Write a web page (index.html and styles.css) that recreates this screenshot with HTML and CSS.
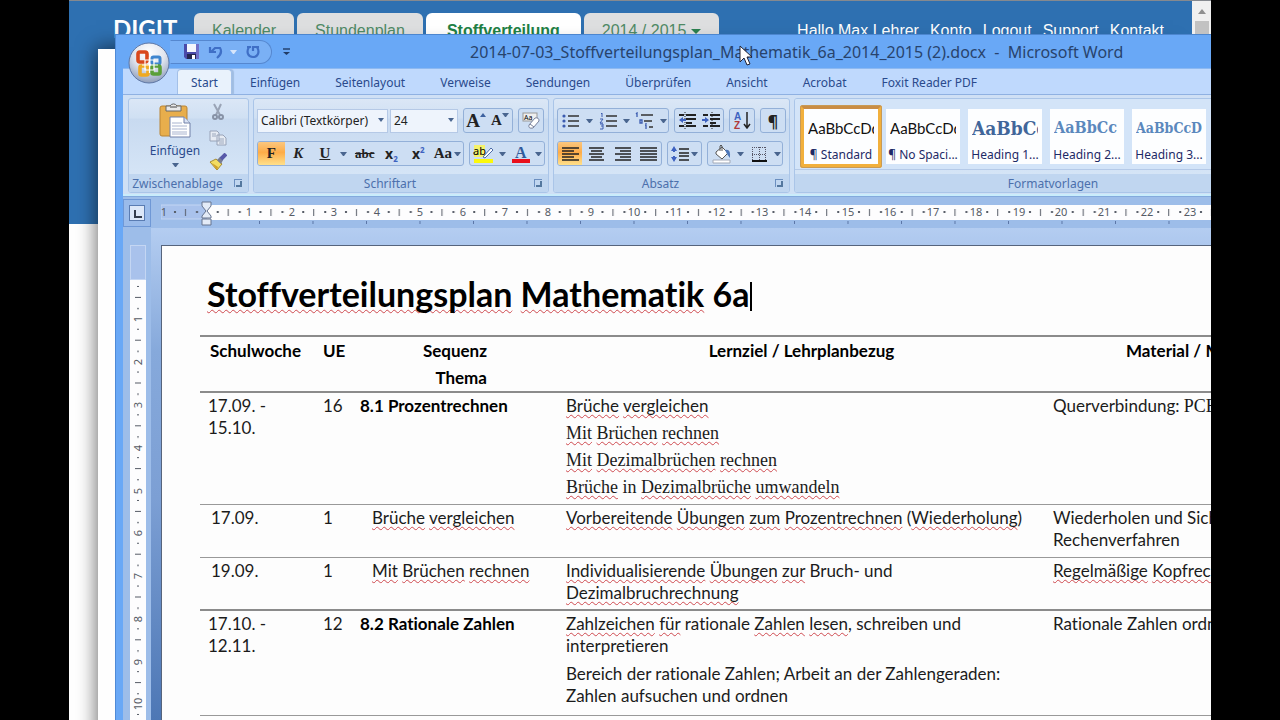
FILE: index.html
```html
<!DOCTYPE html>
<html lang="de">
<head>
<meta charset="utf-8">
<title>Stoffverteilungsplan Mathematik 6a</title>
<link rel="stylesheet" href="styles.css">
</head>
<body>
<div class="stage">
  <div class="site">
    <header class="site-header">
      <span class="brand">DIGIT</span>
      <nav class="site-tabs">
        <a href="#">Kalender</a>
        <a href="#">Stundenplan</a>
        <a href="#" class="current">Stoffverteilung</a>
        <a href="#">2014 / 2015 <i class="caret"></i></a>
      </nav>
      <nav class="site-links">
        <span>Hallo Max Lehrer</span>
        <a href="#">Konto</a>
        <a href="#">Logout</a>
        <a href="#">Support</a>
        <a href="#">Kontakt</a>
      </nav>
    </header>
    <div class="scrollbar"><i class="scroll-up"></i><i class="scroll-thumb"></i></div>
  </div>
  <div class="panel"></div>

  <main class="word">
    <header class="titlebar">
      <div class="quick">
        <button aria-label="Speichern"><svg width="17" height="17" viewBox="0 0 17 17"><path d="M1 1h15v15H3l-2-2z" fill="#4a4aa8"/><path d="M4 1h9v8H4z" fill="#f4f6fc"/><path d="M4 11h9v5H4z" fill="#26264e"/><path d="M9 12h3v4H9z" fill="#fff"/><path d="M13 1h3v15h-3z" fill="#6f6fc8"/></svg></button>
        <button aria-label="Rückgängig"><svg width="16" height="16" viewBox="0 0 16 16"><path d="M2 3v5h6M3 8l4-4h5q3 5-3 10" fill="none" stroke="#3f6fc6" stroke-width="2.2"/></svg></button>
        <i class="caret pale"></i>
        <button aria-label="Wiederholen" class="redo"><svg width="16" height="16" viewBox="0 0 16 16"><path d="M2 3h4M4 3c-3 5-1 10 4 10s7-5 4-10M8 7V3h6" fill="none" stroke="#3f6fc6" stroke-width="2.2"/></svg></button>
      </div>
      <button aria-label="Symbolleiste anpassen" class="customize"><svg width="9" height="8" viewBox="0 0 9 8"><path d="M1 1h7" stroke="#223c66" stroke-width="1.4"/><path d="M1 4h7L4.500 7z" fill="#223c66"/></svg></button>
      <h1>2014-07-03_Stoffverteilungsplan_Mathematik_6a_2014_2015 (2).docx&nbsp; - &nbsp;Microsoft Word</h1>
    </header>
    <button class="office" aria-label="Office"><svg width="42" height="42" viewBox="0 0 42 42">
      <defs><radialGradient id="orb" cx=".5" cy=".25" r=".8"><stop offset="0" stop-color="#fff"/><stop offset=".5" stop-color="#dfe4ee"/><stop offset="1" stop-color="#8595b4"/></radialGradient></defs>
      <circle cx="21" cy="21" r="20" fill="url(#orb)" stroke="#5f78a6"/>
      <g fill="none" stroke-width="3.600"><rect x="10" y="10" width="9" height="10" rx="2" stroke="#d9481c"/><rect x="24" y="15" width="8" height="7" rx="1.500" stroke="#3f86cf" stroke-width="3"/><rect x="12" y="24" width="8" height="9" rx="1.500" stroke="#f0a920"/><rect x="24" y="24" width="8" height="8" rx="1.500" stroke="#5a9f38"/></g>
      <path d="M17 18h9v10h-9zM21.500 15v16M14 23h16" fill="none" stroke="#fff" stroke-width="1.200"/></svg></button>

    <nav class="tabs">
      <button class="active">Start</button>
      <button>Einfügen</button>
      <button>Seitenlayout</button>
      <button>Verweise</button>
      <button>Sendungen</button>
      <button>Überprüfen</button>
      <button>Ansicht</button>
      <button>Acrobat</button>
      <button>Foxit Reader PDF</button>
    </nav>

    <div class="ribbon">
      <section class="group clipboard">
        <div class="tools clip-tools">
          <button class="paste"><svg width="32" height="35" viewBox="0 0 32 35"><rect x="1" y="3" width="27" height="30" rx="2" fill="#e8ae4c" stroke="#b98434"/><path d="M7 3h4a4 4 0 0 1 7 0h4v5H7z" fill="#e9e9e9" stroke="#666"/><path d="M11 4h7" stroke="#444"/><path d="M11 14h14l6 6v14H11z" fill="#fff" stroke="#7080a8"/><path d="M25 14v6h6" fill="#dbe3f4" stroke="#7080a8"/><path d="M13 20h10M13 23h15M13 26h15M13 29h15M13 31h15" stroke="#a9b4cf"/></svg>
            <span>Einfügen</span><i class="caret"></i></button>
          <div class="clip-side">
            <button aria-label="Ausschneiden"><svg width="18" height="18" viewBox="0 0 18 18"><path d="M5 1l6 11M12 1L7 12" stroke="#9aa4b6" stroke-width="2"/><circle cx="6" cy="14" r="2" fill="none" stroke="#8792a6" stroke-width="2"/><circle cx="12" cy="14" r="2" fill="none" stroke="#8792a6" stroke-width="2"/></svg></button>
            <button aria-label="Kopieren"><svg width="18" height="18" viewBox="0 0 18 18"><path d="M1 3h7l2 2v8H1zM8 7h6l3 3v7H8z" fill="#e6ebf3" stroke="#98a3b8"/><path d="M3 6h4M3 8h4M10 11h5M10 13h5M10 15h5" stroke="#9ca8bd"/></svg></button>
            <button aria-label="Format übertragen"><svg width="18" height="18" viewBox="0 0 18 18"><path d="M1 9l6-3 6 5-5 6z" fill="#f2dc62" stroke="#a68b33"/><path d="M3 10l6 4-1 3z" fill="#d0a028"/><path d="M8 7l3-3 3 3-2 4z" fill="#777c92"/><path d="M12 6l5-5" stroke="#5759a9" stroke-width="4"/></svg></button>
          </div>
        </div>
        <footer>Zwischenablage<button class="launcher" aria-label="Zwischenablage öffnen"></button></footer>
      </section>

      <section class="group font">
        <div class="tools">
          <div class="row">
            <div class="combos"><label class="combo face"><select aria-label="Schriftart"><option>Calibri (Textkörper)</option></select></label><label class="combo size"><select aria-label="Schriftgrad"><option>24</option></select></label></div>
            <div class="set"><button class="serif big" aria-label="Schrift vergrößern">A<i class="up"></i></button><button class="serif" aria-label="Schrift verkleinern">A<i class="caret raised"></i></button></div>
            <div class="set"><button aria-label="Formatierung löschen"><svg width="20" height="20" viewBox="0 0 20 20"><rect x="2" y="2" width="14" height="8" fill="#eee" stroke="#999"/><text x="3" y="9" class="tiny">Aa</text><path d="M8 14l6-7q4-1 4 3l-6 7q-5 1-4-3z" fill="#fff" stroke="#77809a"/><path d="M9 13l4 3" stroke="#77809a"/></svg></button></div>
          </div>
          <div class="row">
            <div class="set text-set">
              <button class="serif on">F</button><button class="serif"><em>K</em></button><button class="serif"><u>U</u></button><i class="caret"></i>
              <button class="serif abc"><s>abc</s></button><button class="sans">x<sub>2</sub></button><button class="sans">x<sup>2</sup></button><button class="serif wide">Aa<i class="caret"></i></button>
            </div>
            <div class="set color-set">
              <button aria-label="Texthervorhebungsfarbe"><svg width="22" height="20" viewBox="0 0 22 20"><path d="M1 1h11v12H1z" fill="#f6f26a"/><text x="0" y="11" class="ab">ab</text><path d="M10 13l8-9 2 2-8 8z" fill="#fff" stroke="#4b6ba8"/><path d="M1 15h19v4H1z" fill="#fbf80c"/></svg></button><i class="caret"></i>
              <button aria-label="Schriftfarbe"><svg width="20" height="20" viewBox="0 0 20 20"><text x="4" y="14" class="fc">A</text><path d="M1 15h18v4H1z" fill="#e9101c"/></svg></button><i class="caret"></i>
            </div>
          </div>
        </div>
        <footer>Schriftart<button class="launcher" aria-label="Schriftart öffnen"></button></footer>
      </section>

      <section class="group para">
        <div class="tools">
          <div class="row">
            <div class="set lists">
              <button aria-label="Aufzählung"><svg width="18" height="18" viewBox="0 0 18 18"><path d="M6 4h11M6 9h11M6 14h11" stroke="#333" stroke-width="1.300"/><g fill="#3c5cb0"><circle cx="2" cy="4" r="1.600"/><circle cx="2" cy="9" r="1.600"/><circle cx="2" cy="14" r="1.600"/></g></svg></button><i class="caret"></i>
              <button aria-label="Nummerierung"><svg width="18" height="18" viewBox="0 0 18 18"><path d="M7 4h11M7 9h11M7 14h11" stroke="#333" stroke-width="1.300"/><path d="M2 2l1-1v4M1 7h3l-3 4h3M1 12h3v5H1M2 14h2" fill="none" stroke="#3c5cb0"/></svg></button><i class="caret"></i>
              <button aria-label="Liste mit mehreren Ebenen"><svg width="19" height="18" viewBox="0 0 19 18"><path d="M6 3h12M9 9h8M14 15h4" stroke="#333" stroke-width="1.300"/><path d="M1 2l1-1v4M5 8h2v3H5zM10 13h1v4M11 11v1" fill="none" stroke="#3c5cb0" stroke-width="1.300"/></svg></button><i class="caret"></i>
            </div>
            <div class="set">
              <button aria-label="Einzug verkleinern"><svg width="19" height="18" viewBox="0 0 19 18"><path d="M1 3h5M8 3h10M8 7h10M8 11h6M1 14h5M8 14h10" stroke="#222" stroke-width="2"/><path d="M7 0v18" stroke="#222" stroke-dasharray="1 1"/><path d="M1 8l4-3v2h3v2H5v2z" fill="#3e62c0"/></svg></button>
              <button aria-label="Einzug vergrößern"><svg width="19" height="18" viewBox="0 0 19 18"><path d="M1 3h5M8 3h10M8 7h10M8 11h6M1 14h5M8 14h10" stroke="#222" stroke-width="2"/><path d="M10 0v18" stroke="#222" stroke-dasharray="1 1"/><path d="M7 8L3 5v2H0v2h3v2z" fill="#3e62c0"/></svg></button>
            </div>
            <div class="set"><button aria-label="Sortieren"><svg width="19" height="19" viewBox="0 0 19 19"><text x="1" y="9" class="sort a">A</text><text x="1" y="18" class="sort z">Z</text><path d="M14 1v15M11 13l3 4 3-4" fill="none" stroke="#222" stroke-width="1.500"/></svg></button></div>
            <div class="set"><button class="mark" aria-label="Absatzmarken">¶</button></div>
          </div>
          <div class="row">
            <div class="set align">
              <button class="on" aria-label="Linksbündig"><svg width="17" height="16" viewBox="0 0 17 16"><path d="M0 2h17M0 5h12M0 8h17M0 11h12M0 14h17" stroke="#222" stroke-width="1.600"/></svg></button>
              <button aria-label="Zentriert"><svg width="17" height="16" viewBox="0 0 17 16"><path d="M1 2h15M3 5h11M1 8h15M3 11h11M1 14h15" stroke="#222" stroke-width="1.600"/></svg></button>
              <button aria-label="Rechtsbündig"><svg width="17" height="16" viewBox="0 0 17 16"><path d="M1 2h16M6 5h11M1 8h16M6 11h11M1 14h16" stroke="#222" stroke-width="1.600"/></svg></button>
              <button aria-label="Blocksatz"><svg width="17" height="16" viewBox="0 0 17 16"><path d="M0 2h17M0 5h17M0 8h17M0 11h17M0 14h17" stroke="#222" stroke-width="1.600"/></svg></button>
            </div>
            <div class="set"><button class="spacing" aria-label="Zeilenabstand"><svg width="18" height="18" viewBox="0 0 18 18"><path d="M8 4h10M8 8h10M8 11h10M8 15h10" stroke="#222" stroke-width="1.500"/><path d="M3 1l3 5H0zM3 17l3-5H0z" fill="#3e62c0"/><path d="M3 4v3M3 11v3" stroke="#3e62c0" stroke-width="2"/></svg><i class="caret"></i></button></div>
            <div class="set shade">
              <button aria-label="Schattierung"><svg width="20" height="20" viewBox="0 0 20 20"><path d="M4 8l6-5 6 6-6 6-6-5z" fill="#fff" stroke="#555"/><path d="M8 7V2q1-2 2 0v5" fill="none" stroke="#555"/><path d="M13 6q6-2 5 8l-3-4z" fill="#4c76b8"/><path d="M1 16h17v3H1z" fill="#fff" stroke="#a3aab8"/></svg></button><i class="caret"></i>
              <button aria-label="Rahmen"><svg width="18" height="18" viewBox="0 0 18 18"><path d="M2 2.500h14M2 9.500h14M2.500 2v13M9.500 2v13M15.500 2v13" stroke="#556" stroke-dasharray="1 1"/><path d="M2 16h15" stroke="#111" stroke-width="2"/></svg></button><i class="caret"></i>
            </div>
          </div>
        </div>
        <footer>Absatz<button class="launcher" aria-label="Absatz öffnen"></button></footer>
      </section>

      <section class="group styles">
        <div class="gallery">
          <button class="chosen"><span class="sample">AaBbCcDd</span><span>¶ Standard</span></button>
          <button><span class="sample">AaBbCcDd</span><span>¶ No Spaci...</span></button>
          <button><span class="sample h-one">AaBbCc</span><span>Heading 1...</span></button>
          <button><span class="sample h-two">AaBbCc</span><span>Heading 2...</span></button>
          <button><span class="sample h-three">AaBbCcD</span><span>Heading 3...</span></button>
        </div>
        <footer>Formatvorlagen</footer>
      </section>
    </div>

    <div class="ruler-row">
      <button class="tabstop" aria-label="Tabstopp"><i></i></button>
      <svg class="ruler" height="31">
        <defs>
          <pattern id="ticks" x="3" y="0" width="42.750" height="31" patternUnits="userSpaceOnUse"><path d="M10 14h2v2h-2zM21 12h1v7h-1zM32 14h2v2h-2z" fill="#555b66"/></pattern>
          <pattern id="stops" x="97" y="0" width="53.500" height="31" patternUnits="userSpaceOnUse"><path d="M1 24h1v3H1z" fill="#5b76a6"/></pattern>
        </defs>
        <rect x="0" y="8" width="46" height="14" fill="#a9c2ec" stroke="#c4d6f3"/>
        <rect x="46" y="8" width="100%" height="15" fill="#fdfdfe"/>
        <rect x="4" width="100%" height="31" fill="url(#ticks)"/>
        <rect x="90" width="100%" height="31" fill="url(#stops)"/>
        <g class="numbers">
          <text x="3" y="19">1</text><text x="88" y="19">1</text><text x="131" y="19">2</text><text x="173" y="19">3</text><text x="216" y="19">4</text><text x="259" y="19">5</text><text x="302" y="19">6</text><text x="344" y="19">7</text><text x="387" y="19">8</text><text x="430" y="19">9</text><text x="473" y="19">10</text><text x="515" y="19">11</text><text x="558" y="19">12</text><text x="601" y="19">13</text><text x="644" y="19">14</text><text x="687" y="19">15</text><text x="729" y="19">16</text><text x="772" y="19">17</text><text x="815" y="19">18</text><text x="858" y="19">19</text><text x="900" y="19">20</text><text x="943" y="19">21</text><text x="986" y="19">22</text><text x="1029" y="19">23</text>
        </g>
        <path d="M41 5h9v4l-4 5 4 5v2h-9v-2l4-5-4-5zM41 22h9v6h-9z" fill="#e3ebf7" stroke="#66748f"/>
      </svg>
    </div>

    <div class="workspace">
      <div class="side-ruler">
        <svg width="16" height="100%">
          <defs><pattern id="vticks" x="0" y="31" width="16" height="42.800" patternUnits="userSpaceOnUse"><path d="M7 10h2v1H7zM5 21h6v1H5zM7 32h2v1H7z" fill="#555b66"/></pattern></defs>
          <rect width="16" height="100%" fill="#fdfdfe"/>
          <rect y="36" width="16" height="100%" fill="url(#vticks)"/>
          <rect x="0.500" y="0.500" width="15" height="34" fill="#a9c2ec" stroke="#c4d6f3"/>
          <g class="numbers">
            <text transform="translate(12 74) rotate(-90)">1</text><text transform="translate(12 117) rotate(-90)">2</text><text transform="translate(12 160) rotate(-90)">3</text><text transform="translate(12 203) rotate(-90)">4</text><text transform="translate(12 246) rotate(-90)">5</text><text transform="translate(12 288) rotate(-90)">6</text><text transform="translate(12 331) rotate(-90)">7</text><text transform="translate(12 374) rotate(-90)">8</text><text transform="translate(12 417) rotate(-90)">9</text><text transform="translate(12 459) rotate(-90)">10</text>
          </g>
        </svg>
      </div>
      <article class="page">
        <h2><span class="sp">Stoffverteilungsplan</span> <span class="sp">Mathematik</span> 6a<i class="text-caret"></i></h2>
        <table>
          <colgroup><col class="c-week"><col class="c-ue"><col class="c-topic"><col class="c-goal"><col></colgroup>
          <thead><tr><th class="week">Schulwoche</th><th class="ue">UE</th><th class="seq">Sequenz<br>Thema</th><th>Lernziel / Lehrplanbezug</th><th class="mat">Material / M</th></tr></thead>
          <tbody>
            <tr class="unit tall"><td>17.09. -<br>15.10.</td><td>16</td><td><b>8.1 Prozentrechnen</b></td>
              <td class="paras"><p><span class="sp">Brüche</span> <span class="sp">vergleichen</span></p><p class="times"><span class="sp">Mit</span> <span class="sp">Brüchen</span> <span class="sp">rechnen</span></p><p class="times"><span class="sp">Mit</span> <span class="sp">Dezimalbrüchen</span> <span class="sp">rechnen</span></p><p class="times"><span class="sp">Brüche</span> in <span class="sp">Dezimalbrüche</span> <span class="sp">umwandeln</span></p></td>
              <td>Querverbindung: <span class="times">PCB</span></td></tr>
            <tr class="lesson"><td>17.09.</td><td>1</td><td><span class="sp">Brüche</span> <span class="sp">vergleichen</span></td>
              <td><span class="sp">Vorbereitende</span> <span class="sp">Übungen</span> <span class="sp">zum</span> <span class="sp">Prozentrechnen</span> (<span class="sp">Wiederholung</span>)</td><td>Wiederholen und Sich<br>Rechenverfahren</td></tr>
            <tr class="lesson"><td>19.09.</td><td>1</td><td><span class="sp">Mit</span> <span class="sp">Brüchen</span> <span class="sp">rechnen</span></td>
              <td><span class="sp">Individualisierende</span> <span class="sp">Übungen</span> <span class="sp">zur</span> Bruch- und<br><span class="sp">Dezimalbruchrechnung</span></td><td><span class="sp">Regelmäßige</span> <span class="sp">Kopfrec</span></td></tr>
            <tr class="unit heavy"><td>17.10. -<br>12.11.</td><td>12</td><td><b>8.2 Rationale Zahlen</b></td>
              <td><p class="gap"><span class="sp">Zahlzeichen</span> <span class="sp">für</span> rationale <span class="sp">Zahlen</span> <span class="sp">lesen</span>, schreiben und<br>interpretieren</p><p>Bereich der rationale Zahlen; Arbeit an der Zahlengeraden:<br>Zahlen aufsuchen und ordnen</p></td><td>Rationale Zahlen ordn</td></tr>
          </tbody>
        </table>
      </article>
    </div>
  </main>
  <svg class="cursor" width="14" height="22" viewBox="0 0 14 22"><path d="M1 1v16l4-4 3 7 3-1-3-7h5z" fill="#fff" stroke="#223" /></svg>
</div>
</body>
</html>
```
FILE: styles.css
```css
* { box-sizing: border-box; }
body { margin: 0; background: #000; font-family: "Noto Sans", sans-serif; }
button { border: 0; padding: 0; margin: 0; background: none; font: inherit; color: inherit; }
svg { display: block; }
h1, h2, p { margin: 0; font-weight: normal; }
a { color: inherit; text-decoration: none; }

.stage { position: relative; margin: 0 69px; height: 100vh; overflow: hidden; background: #fff; }

/* web page behind the editor */
.site { display: flex; height: 100%; border-top: 1px solid #85898f; }
.site-header { flex: 1; display: flex; align-items: flex-start; height: 223px; padding: 12px 28px 0 44px; background: #2e70b1; font: 16px "Liberation Sans", Arial, sans-serif; white-space: nowrap; }
.brand { width: 81px; padding-top: 2px; color: #fff; font: bold 24px/28px Lato, sans-serif; }
.site-tabs { display: flex; gap: 3px; }
.site-tabs a { height: 60px; padding: 9px 18px; border-radius: 6px 6px 0 0; background: #dedfe0; color: #4f8a66; }
.site-tabs .current { padding: 9px 21px; background: #fff; color: #218044; font-weight: bold; }
.site-links { display: flex; gap: 11px; margin-left: auto; padding-top: 9px; color: #fff; }
.scrollbar { width: 19px; padding: 8px 2px 0 3px; background: #f0f0f0; }
.scroll-up { display: block; width: 8px; margin: 0 3px 7px; border: 4px solid transparent; border-top: 0; border-bottom: 5px solid #909090; }
.scroll-thumb { display: block; height: 400px; background: #c2c2c2; }
.panel { position: absolute; top: 49px; left: 29px; right: 40px; bottom: -30px; background: #fefefe; box-shadow: 0 0 18px 2px rgba(0, 0, 0, .55); }

.caret { display: inline-block; flex: none; width: 7px; height: 4px; border: solid transparent; border-width: 4px 3px 0; border-top-color: #49658f; vertical-align: middle; }
.site-tabs .caret { border-width: 5px 5px 0; border-top-color: #2b8050; width: 10px; height: 5px; }

/* editor window */
.word { position: absolute; top: 34px; left: 46px; right: 0; bottom: 0; display: flex; flex-direction: column; padding-left: 7px; background: #69a8f6; border-left: 1px solid #4f8ad6; border-top: 1px solid #4c86cf; white-space: nowrap; overflow: hidden; }
.titlebar { display: flex; align-items: center; height: 33px; }
.quick { display: flex; align-items: center; gap: 8px; width: 102px; height: 24px; margin-left: 47px; padding-left: 12px; border: 1px solid #5587cf; border-left-color: transparent; border-radius: 0 12px 12px 0; background: #7ab0f5; }
.quick .caret { margin-left: -2px; }
.quick .pale { border-top-color: #d6e5fb; }
.customize { margin-left: 10px; }
.titlebar h1 { margin-left: 179px; color: #28436c; font: 16px/24px "Noto Sans", sans-serif; }
.office { position: absolute; top: 7px; left: 12px; }
.tabs { display: flex; gap: 1px; align-items: flex-end; height: 27px; padding-left: 54px; background: #bfd9fd; border-top: 1px solid #8db9f1; border-bottom: 1px solid #8fb1e2; color: #2a4a8c; font-size: 12px; }
.tabs button { height: 24px; padding: 0 17px; }
.tabs .active { height: 25px; padding: 0 13px; border: 1px solid #a3c0e8; border-bottom: 0; border-radius: 4px 4px 0 0; background: #e9f2fc; box-shadow: 2px 0 1px #a0bde2; }

.ribbon { display: flex; gap: 4px; height: 102px; padding: 3px 0 3px 5px; background: #cfe0f5; border-bottom: 1px solid #83aadd; box-shadow: inset 0 -2px #c9ecfb; overflow: hidden; }
.group { flex: none; display: flex; flex-direction: column; border: 1px solid #aac5e8; border-radius: 3px; background: linear-gradient(#dbe7f6, #d0e0f3 20%, #c8daf0 22%, #d9e8f8); color: #222; overflow: hidden; }
.group footer { position: relative; height: 18px; background: #c0d6f0; color: #4c70ac; font-size: 12px; line-height: 19px; text-align: center; padding-right: 22px; }
.clipboard { width: 121px; }
.font { width: 296px; }
.para { width: 237px; }
.styles { flex: 1 0 420px; }
.styles footer { padding-left: 98px; padding-right: 0; }
.launcher { position: absolute; right: 6px; top: 5px; width: 8px; height: 8px; border: solid #6b8fc0; border-width: 1px 0 0 1px; }
.launcher::after { content: ""; position: absolute; right: 0; bottom: 0; width: 4px; height: 4px; border: solid #54789f; border-width: 0 2px 2px 0; }
.tools { flex: 1; padding: 9px 3px 0; }
.clip-tools { display: flex; gap: 7px; padding: 4px 0 0 19px; }
.paste { display: flex; flex-direction: column; align-items: center; width: 54px; height: 66px; color: #2a4a8c; font-size: 12px; line-height: 25px; }
.clip-side { display: flex; flex-direction: column; gap: 7px; }
.row { display: flex; gap: 5px; margin-bottom: 9px; height: 24px; }
.combos { display: flex; gap: 2px; }
.combo { position: relative; height: 24px; }
.combo select { appearance: none; width: 100%; height: 24px; padding: 0 3px; border: 1px solid #b5c9e6; border-radius: 0; background: #eef4fc; color: #222; font: 12px "Noto Sans", sans-serif; }
.combo::after { content: ""; position: absolute; right: 4px; top: 10px; border: solid transparent; border-width: 4px 3px 0; border-top-color: #49658f; }
.face { width: 131px; }
.size { width: 68px; }
.set { display: flex; align-items: center; border: 1px solid #93b0d8; border-radius: 3px; background: #cddef3; height: 25px; overflow: hidden; }
.set button { display: flex; align-items: center; justify-content: center; width: 24px; height: 23px; }
.set .on { background: linear-gradient(#fbc77f, #fdac48 45%, #ffe08a); }
.serif { font: bold 15px "Liberation Serif", serif; }
.set .big { font-size: 19px; }
.set .abc { font-size: 13px; }
.up { width: 6px; margin-bottom: 12px; border: 3px solid transparent; border-top: 0; border-bottom: 4px solid #3e62a0; }
.raised { margin-bottom: 12px; }
.sans { font: bold 14px "Noto Sans", sans-serif; }
.sans sub, .sans sup { color: #3e62c0; font-size: 8px; line-height: 8px; }
.sans sub { padding-top: 10px; }
.sans sup { padding-bottom: 8px; }
.text-set { width: 208px; }
.text-set > .caret { margin: 0 4px 0 2px; }
.text-set button { width: 27px; }
.text-set .wide { width: 32px; gap: 2px; }
.color-set { width: 76px; justify-content: space-around; }
.tiny { font: 7px "Noto Sans", sans-serif; }
.ab { font: 11px "Noto Sans", sans-serif; }
.fc { font: bold 16px "Liberation Serif", serif; fill: #315b9c; }
.sort { font: bold 10px "Liberation Sans", sans-serif; }
.a { fill: #3e62c0; }
.z { fill: #b03a3a; }
.lists { width: 112px; justify-content: space-around; }
.mark { font-size: 16px; font-weight: bold; }
.align { width: 105px; justify-content: space-between; }
.set .spacing { width: 33px; gap: 2px; }
.shade { width: 76px; justify-content: space-around; }

.gallery { flex: 1; display: flex; padding: 6px 0 0 5px; margin: 0 0 4px; border-bottom: 1px solid #b5cae8; background: #d3e4f8; }
.gallery button { flex: none; display: flex; flex-direction: column; align-items: center; justify-content: space-between; width: 82px; height: 63px; padding: 8px 2px 1px; border: 4px solid #d3e4f8; background: #fdfeff; color: #1e2a66; font-size: 12px; line-height: 17px; }
.gallery .chosen { border-color: #f2b03c; border-top-color: #c98d45; border-radius: 3px; outline: 1px solid #c89a55; outline-offset: -1px; }
.sample { width: 66px; overflow: hidden; color: #111; font: 15px/22px Lato, sans-serif; text-align: left; }
.h-one, .h-two, .h-three { font-family: "DejaVu Serif Condensed", "DejaVu Serif", serif; font-weight: bold; color: #41669a; font-size: 19px; }
.h-two { font-size: 16px; color: #5b88bd; }
.h-three { font-size: 14px; color: #5b88bd; }

/* rulers */
.ruler-row { display: flex; gap: 10px; height: 31px; background: #9dbde9; }
.tabstop { display: flex; align-items: center; justify-content: center; width: 28px; height: 28px; background: #9abbea; border: 1px solid #6f98d6; margin-top: 2px; }
.tabstop i { width: 16px; height: 16px; background: #dce7f8; border: 1px solid #5a7cb2; padding: 4px; }
.tabstop i::before { content: ""; display: block; width: 6px; height: 6px; border: solid #333c4d; border-width: 0 0 2px 2px; }
.ruler { flex: 1; }
.numbers { font: 11px "Noto Sans", sans-serif; fill: #555b66; text-anchor: middle; }
.side-ruler { width: 28px; padding: 17px 0 0 7px; background: #9dbde9; }
.workspace { flex: 1; display: flex; min-height: 0; background: linear-gradient(#b4cdf1, #86a9db 25%, #7c9fd4 55%, #4d77b5); }

/* document */
.page { flex: 1; min-width: 0; overflow: hidden; margin: 17px 0 0 10px; padding: 24px 0 0 38px; background: #fdfdfd; border: solid #56647c; border-width: 1px 0 0 1px; color: #1b1b1b; font: 17px/22px Lato, sans-serif; font-variant-ligatures: none; }
.page h2 { margin-bottom: 17px; padding-left: 7px; color: #000; font-size: 34px; font-weight: bold; line-height: 48px; }
.text-caret { display: inline-block; width: 2px; height: 29px; background: #000; vertical-align: -4px; }
.sp { text-decoration: underline wavy #cf4a50 1px; text-underline-offset: 2px; text-decoration-skip-ink: none; }
.page table { width: 100%; table-layout: fixed; border-collapse: collapse; border-bottom: 1px solid #999; }
.c-week { width: 115px; }
.c-ue { width: 37px; }
.c-topic { width: 206px; }
.c-goal { width: 487px; }
.page th, .page td { padding: 2px 8px 0; vertical-align: top; text-align: left; }
.page th { height: 54px; padding-top: 0; border-top: 2px solid #8b8b8b; color: #000; line-height: 27px; text-align: center; }
.page .week { padding: 0 0 0 10px; text-align: left; }
.page .ue { text-align: left; }
.page .seq { padding-right: 71px; text-align: right; }
.page .mat { padding-left: 81px; text-align: left; }
.unit { border-top: 2px solid #8b8b8b; }
.unit b { color: #000; }
.tall { height: 112px; }
.heavy { height: 105px; }
.lesson { height: 53px; border-top: 1px solid #999; }
.page .lesson td:first-child { padding-left: 11px; }
.page .lesson td:nth-child(3) { padding-left: 20px; }
.paras p { height: 27px; }
.gap { margin-bottom: 6px; }
.times { font-family: "Liberation Serif", serif; font-size: 18px; }

.cursor { position: absolute; top: 45px; left: 670px; }
```
